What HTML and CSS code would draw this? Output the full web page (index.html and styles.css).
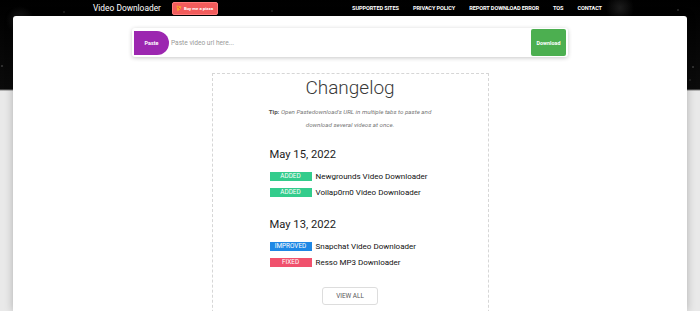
FILE: index.html
```html
<!DOCTYPE html>
<html>
    <head>
        <title>Video Downloader - Changelog</title>
        <link rel="stylesheet" href="styles.css">
    </head>
    <body>
        <div class="topbar">
            <a class="brand" href="#">Video Downloader</a>
            <a class="pizza" href="#">
                <svg width="6" height="7" viewBox="0 0 6 7"><path d="M0.5 0.5 L5.5 1.5 Q5 4 1.5 6.5 Z" fill="#f7a531"/><circle cx="2.2" cy="2.2" r="0.6" fill="#e53935"/><circle cx="3.4" cy="3.4" r="0.5" fill="#e53935"/></svg>
                Buy me a pizza
            </a>
            <nav class="menu">
                <a href="#">Supported Sites</a>
                <a href="#">Privacy Policy</a>
                <a href="#">Report Download Error</a>
                <a href="#">TOS</a>
                <a href="#">Contact</a>
            </nav>
        </div>

        <div class="card">
            <div class="search">
                <button class="paste-btn">Paste</button>
                <input type="text" placeholder="Paste video url here...">
                <button class="download-btn">Download</button>
            </div>

            <div class="changelog">
                <h1>Changelog</h1>
                <p class="tip"><b>Tip:</b> Open Pastedownload's URL in multiple tabs to paste and<br>download several videos at once.</p>

                <div class="log">
                    <h2>May 15, 2022</h2>
                    <div class="entry"><span class="tag added">Added</span> Newgrounds Video Downloader</div>
                    <div class="entry"><span class="tag added">Added</span> Voilap0rn0 Video Downloader</div>

                    <h2 class="later">May 13, 2022</h2>
                    <div class="entry"><span class="tag improved">Improved</span> Snapchat Video Downloader</div>
                    <div class="entry"><span class="tag fixed">Fixed</span> Resso MP3 Downloader</div>
                </div>

                <div class="more"><a href="#" class="view-all">View All</a></div>
            </div>
        </div>
    </body>
</html>
```

FILE: styles.css
```css
body {
    margin: 0;
    font-family: Roboto, "Liberation Sans", Arial, sans-serif;
    background:
        radial-gradient(circle at 64px 12px, #555 0, transparent 1px),
        radial-gradient(circle at 272px 11px, #444 0, transparent 1px),
        radial-gradient(circle at 2px 66px, #888 0, transparent 1px),
        radial-gradient(circle at 693px 67px, #888 0, transparent 1px),
        radial-gradient(circle at 690px 80px, #555 0, transparent 1px),
        radial-gradient(circle at 678px 10px, #777 0, transparent 1px),
        radial-gradient(circle at 20px 20px, #1a1a1a 0, transparent 14px),
        radial-gradient(circle at 620px 8px, #1c1c1c 0, transparent 14px),
        linear-gradient(#000 0, #0b0b0b 89px, #7a7a7a 90px, #e9e9e9 91px);
    background-repeat: no-repeat;
    background-color: #e9e9e9;
    height: 311px;
    overflow: hidden;
}

a { text-decoration: none; }

.topbar {
    height: 16px;
    display: flex;
    align-items: center;
    padding-left: 93px;
}
.brand {
    color: #fff;
    font-size: 8.4px;
}
.pizza {
    margin-left: 11px;
    display: flex;
    align-items: center;
    gap: 2px;
    height: 11px;
    padding: 0 4px 0 3px;
    background: #f25c5c;
    border: 1px solid #ff7b7b;
    border-radius: 2px;
    color: #fff;
    font-size: 4.3px;
    font-weight: 700;
}
.menu {
    margin-left: 134px;
    display: flex;
    gap: 14px;
}
.menu a {
    color: #fff;
    font-size: 5.6px;
    font-weight: 700;
    text-transform: uppercase;
    letter-spacing: -0.1px;
}

.card {
    margin: 0 13px;
    height: 283px;
    overflow: hidden;
    background: #fff;
    border-radius: 3px 3px 0 0;
    box-shadow: 0 0 8px rgba(0, 0, 0, 0.25);
    padding-top: 12px;
}

.search {
    width: 436px;
    height: 29px;
    margin: 0 auto;
    display: flex;
    align-items: center;
    padding: 0 2px;
    box-sizing: border-box;
    background: #fff;
    border-radius: 3px;
    box-shadow: 0 1px 4px rgba(0, 0, 0, 0.22);
}
.paste-btn {
    width: 35px;
    height: 24px;
    border: none;
    background: #9c27b0;
    color: #fff;
    font-family: inherit;
    font-size: 5.4px;
    font-weight: 700;
    border-radius: 0 12px 12px 0;
    padding: 0;
}
.search input {
    flex: 1;
    border: none;
    outline: none;
    height: 20px;
    padding: 0 2px;
    font-family: inherit;
    font-size: 6.6px;
}
.search input::placeholder { color: #999; }
.download-btn {
    width: 35px;
    height: 27px;
    border: none;
    background: #4caf50;
    color: #fff;
    font-family: inherit;
    font-size: 5.4px;
    font-weight: 700;
    border-radius: 2px;
    padding: 0;
}

.changelog {
    width: 277px;
    margin: 16px auto 0;
    border: 1px dashed #d6d6d6;
    box-sizing: border-box;
    height: 260px;
    padding-top: 2px;
}
.changelog h1 {
    margin: 0;
    text-align: center;
    font-size: 19px;
    font-weight: 300;
    line-height: 24px;
    color: #3a3a3a;
}
.tip {
    margin: 6px 0 0;
    text-align: center;
    font-size: 6.2px;
    line-height: 13px;
    font-style: italic;
    color: #777;
}
.tip b { color: #555; font-style: normal; }

.log {
    margin-top: 16px;
    padding-left: 57px;
}
.log h2 {
    margin: 0 0 6px;
    font-size: 11.2px;
    font-weight: 400;
    line-height: 14px;
    color: #222;
}
.log h2.later { margin-top: 18px; }
.entry {
    display: flex;
    align-items: center;
    height: 16px;
    font-size: 8px;
    font-weight: 400;
    color: #111;
}
.tag {
    width: 42px;
    height: 9px;
    margin-right: 4px;
    display: flex;
    align-items: center;
    justify-content: center;
    color: #fff;
    font-size: 6.4px;
    font-weight: 400;
    text-transform: uppercase;
}
.tag.added { background: #33cc8c; }
.tag.improved { background: #1e88e5; }
.tag.fixed { background: #f0516d; }

.more {
    margin-top: 13px;
    text-align: center;
}
.view-all {
    display: inline-block;
    width: 56px;
    height: 18px;
    line-height: 17px;
    box-sizing: border-box;
    border: 1px solid #ddd;
    border-radius: 3px;
    color: #555;
    font-size: 6.4px;
    text-transform: uppercase;
}
```
